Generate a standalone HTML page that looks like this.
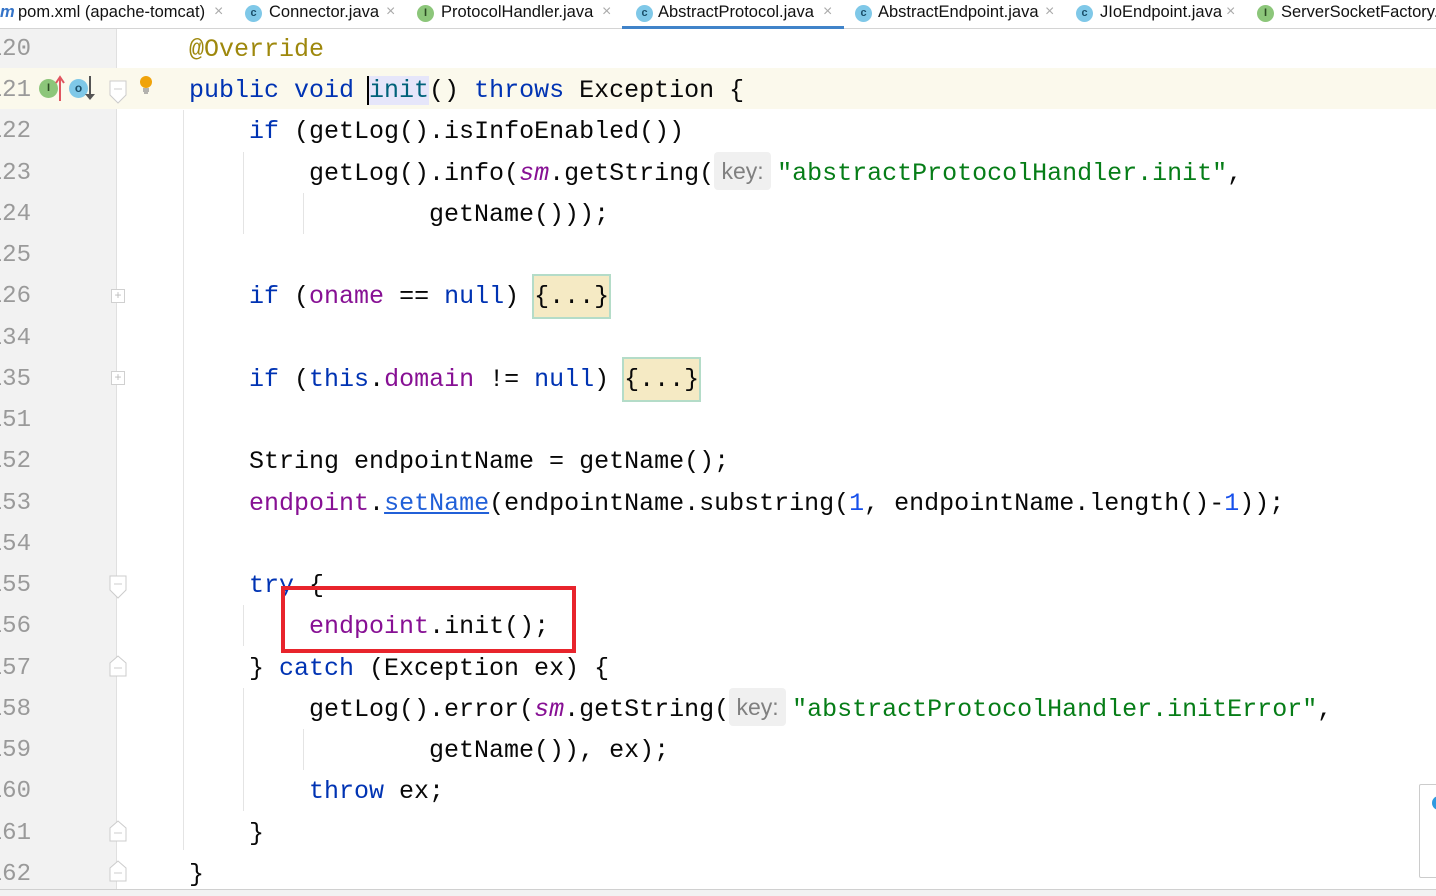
<!DOCTYPE html>
<html><head><meta charset="utf-8"><style>
*{margin:0;padding:0;box-sizing:border-box}
body{width:1436px;height:896px;overflow:hidden;background:#fff;position:relative;font-family:"Liberation Mono","DejaVu Sans Mono",monospace}
.tabs{position:absolute;left:0;top:0;width:1436px;height:29px;background:#fff;border-bottom:1px solid #d4d4d4;font-family:"Liberation Sans",sans-serif;font-size:16.5px;color:#111}
.t{position:absolute;top:3px;white-space:nowrap}
.x{position:absolute;top:3px;color:#aaa;font-size:16px}
.ic{position:absolute;top:5px;width:17px;height:17px;border-radius:50%;font-size:11px;line-height:17px;text-align:center;font-family:"Liberation Sans",sans-serif;font-weight:bold}
.c{background:#7fc8e8;color:#1b4f6a}
.i{background:#8cc67a;color:#2c4b23}
.gut{position:absolute;left:0;top:29px;width:117px;height:860px;background:#f2f2f2;border-right:1px solid #e0e0e0}
.hl{position:absolute;left:0;top:68px;width:1436px;height:41px;background:#fbf9ec}
.num{position:absolute;right:1405px;width:60px;text-align:right;color:#9a9a9a;font-size:24px;white-space:nowrap}
.ln{position:absolute;left:189px;font-size:25px;line-height:41px;height:41px;white-space:pre;color:#080808}
.k{color:#0033b3}.f{color:#871094}.s{color:#067d17}.n{color:#1750eb}.a{color:#9e880d}.m{color:#00627a}
.inl{display:inline-block;width:57px;height:38px;margin-right:6px;background:#f0f0f0;border-radius:4px;color:#808080;font-family:"Liberation Sans",sans-serif;font-size:23px;line-height:38px;text-align:center;vertical-align:middle;position:relative;top:-2px}
.fold{display:inline-block;background:#f5eac4;outline:2px solid #b4dcc8;outline-offset:0}
.g{position:absolute;width:1px;background:#e4e4e4}
.fm{position:absolute;left:111px;width:14px;height:14px;border:1px solid #d0d0d0;background:#fff;color:#bbb;font-size:12px;line-height:11px;text-align:center;font-family:"Liberation Sans",sans-serif}
</style></head><body>
<div class="tabs">
<span class="t" style="left:0;color:#3574c8;font-style:italic;font-weight:bold">m</span>
<span class="t" style="left:18px">pom.xml (apache-tomcat)</span><span class="x" style="left:214px">×</span>
<span class="ic c" style="left:245px">c</span><span class="t" style="left:269px">Connector.java</span><span class="x" style="left:386px">×</span>
<span class="ic i" style="left:417px">I</span><span class="t" style="left:441px">ProtocolHandler.java</span><span class="x" style="left:602px">×</span>
<div style="position:absolute;left:622px;top:0;width:222px;height:29px;background:#fff;border-bottom:3px solid #4083c9"></div>
<span class="ic c" style="left:636px">c</span><span class="t" style="left:658px">AbstractProtocol.java</span><span class="x" style="left:823px">×</span>
<span class="ic c" style="left:855px">c</span><span class="t" style="left:878px">AbstractEndpoint.java</span><span class="x" style="left:1045px">×</span>
<span class="ic c" style="left:1076px">c</span><span class="t" style="left:1100px">JIoEndpoint.java</span><span class="x" style="left:1226px">×</span>
<span class="ic i" style="left:1257px">I</span><span class="t" style="left:1281px">ServerSocketFactory.java</span>
</div>
<div class="gut"></div>
<div class="hl"></div>
<div style="position:absolute;left:0;top:889px;width:1436px;height:7px;background:#f2f2f2;border-top:1px solid #d0d0d0"></div>

<div class="num" style="top:36px">120</div>
<div class="num" style="top:77px">121</div>
<div class="num" style="top:118px">122</div>
<div class="num" style="top:160px">123</div>
<div class="num" style="top:201px">124</div>
<div class="num" style="top:242px">125</div>
<div class="num" style="top:283px">126</div>
<div class="num" style="top:325px">134</div>
<div class="num" style="top:366px">135</div>
<div class="num" style="top:407px">151</div>
<div class="num" style="top:448px">152</div>
<div class="num" style="top:490px">153</div>
<div class="num" style="top:531px">154</div>
<div class="num" style="top:572px">155</div>
<div class="num" style="top:613px">156</div>
<div class="num" style="top:655px">157</div>
<div class="num" style="top:696px">158</div>
<div class="num" style="top:737px">159</div>
<div class="num" style="top:778px">160</div>
<div class="num" style="top:820px">161</div>
<div class="num" style="top:861px">162</div>

<div class="ic i" style="left:39px;top:79px;width:19px;height:19px;line-height:19px">I</div>
<svg style="position:absolute;left:54px;top:74px" width="12" height="28"><path d="M6 27V4M2 9l4-6 4 6" stroke="#e05560" stroke-width="2" fill="none"/></svg>
<div class="ic c" style="left:69px;top:79px;width:19px;height:19px;line-height:18px;font-size:12px">o</div>
<svg style="position:absolute;left:84px;top:74px" width="12" height="28"><path d="M6 2v20" stroke="#555" stroke-width="2"/><path d="M1 20h10l-5 6z" fill="#555"/></svg>
<svg style="position:absolute;left:108px;top:80px" width="20" height="24"><path d="M2 1h16v14l-8 8-8-8z" fill="#fff" stroke="#ccc"/><path d="M6 9h8" stroke="#ccc"/></svg>
<svg style="position:absolute;left:138px;top:74px" width="16" height="22"><circle cx="8" cy="8" r="6" fill="#f0a30a"/><path d="M5 15h6M5 17h6M6 19h4" stroke="#888" stroke-width="1.2"/></svg>

<div class="fm" style="top:289px">+</div>
<div class="fm" style="top:371px">+</div>
<svg style="position:absolute;left:108px;top:575px" width="20" height="24"><path d="M2 1h16v14l-8 8-8-8z" fill="#fff" stroke="#ccc"/><path d="M6 9h8" stroke="#ccc"/></svg>
<svg style="position:absolute;left:108px;top:655px" width="20" height="22"><path d="M2 21h16V8l-8-7-8 7z" fill="#fff" stroke="#ccc"/><path d="M6 13h8" stroke="#ccc"/></svg>
<svg style="position:absolute;left:108px;top:820px" width="20" height="22"><path d="M2 21h16V8l-8-7-8 7z" fill="#fff" stroke="#ccc"/><path d="M6 13h8" stroke="#ccc"/></svg>
<svg style="position:absolute;left:108px;top:860px" width="20" height="22"><path d="M2 21h16V8l-8-7-8 7z" fill="#fff" stroke="#ccc"/><path d="M6 13h8" stroke="#ccc"/></svg>

<div class="g" style="left:183px;top:110px;height:740px"></div>
<div class="g" style="left:243px;top:152px;height:82px"></div>
<div class="g" style="left:303px;top:193px;height:41px"></div>
<div class="g" style="left:243px;top:605px;height:41px"></div>
<div class="g" style="left:243px;top:688px;height:123px"></div>
<div class="g" style="left:303px;top:729px;height:41px"></div>

<div class="ln a" style="top:29px">@Override</div>
<div class="ln" style="top:70px"><span class="k">public void </span><span class="m" style="background:#e6e6fa;border-left:2px solid #000;margin-left:-2px">init</span>() <span class="k">throws</span> Exception {</div>
<div class="ln" style="top:111px">    <span class="k">if</span> (getLog().isInfoEnabled())</div>
<div class="ln" style="top:153px">        getLog().info(<span class="f"><i>sm</i></span>.getString(<span class="inl">key:</span><span class="s">"abstractProtocolHandler.init"</span>,</div>
<div class="ln" style="top:194px">                getName()));</div>
<div class="ln" style="top:276px">    <span class="k">if</span> (<span class="f">oname</span> == <span class="k">null</span>) <span class="fold">{...}</span></div>
<div class="ln" style="top:359px">    <span class="k">if</span> (<span class="k">this</span>.<span class="f">domain</span> != <span class="k">null</span>) <span class="fold">{...}</span></div>
<div class="ln" style="top:441px">    String endpointName = getName();</div>
<div class="ln" style="top:483px">    <span class="f">endpoint</span>.<span style="color:#2160d8;text-decoration:underline">setName</span>(endpointName.substring(<span class="n">1</span>, endpointName.length()-<span class="n">1</span>));</div>
<div class="ln" style="top:565px">    <span class="k">try</span> {</div>
<div class="ln" style="top:606px">        <span class="f">endpoint</span>.init();</div>
<div class="ln" style="top:648px">    } <span class="k">catch</span> (Exception ex) {</div>
<div class="ln" style="top:689px">        getLog().error(<span class="f"><i>sm</i></span>.getString(<span class="inl">key:</span><span class="s">"abstractProtocolHandler.initError"</span>,</div>
<div class="ln" style="top:730px">                getName()), ex);</div>
<div class="ln" style="top:771px">        <span class="k">throw</span> ex;</div>
<div class="ln" style="top:813px">    }</div>
<div class="ln" style="top:854px">}</div>

<div style="position:absolute;left:281px;top:586px;width:295px;height:67px;border:4px solid #e8242c"></div>

<div style="position:absolute;left:1419px;top:784px;width:30px;height:94px;border:1px solid #ccc;background:#fff;border-radius:2px"></div>
<div style="position:absolute;left:1432px;top:796px;width:14px;height:14px;border-radius:50%;background:#2e9ae0"></div>
</body></html>
